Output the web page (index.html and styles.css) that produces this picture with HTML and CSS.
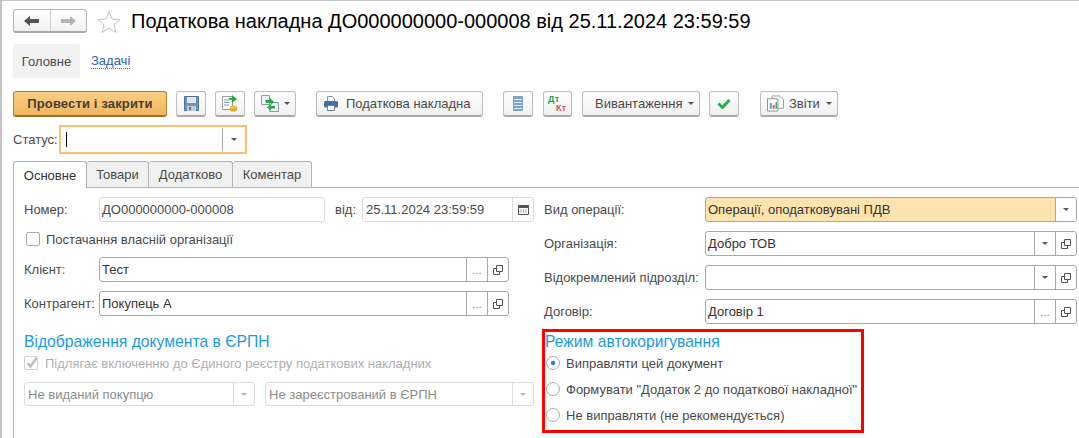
FILE: index.html
```html
<!DOCTYPE html>
<html lang="uk">
<head>
<meta charset="utf-8">
<title>Податкова накладна</title>
<link rel="stylesheet" href="styles.css">
</head>
<body>
<svg class="defs" width="0" height="0" aria-hidden="true">
  <symbol id="open" viewBox="0 0 10 10"><path d="M3.500 .5h6v6h-6z" fill="none" stroke="#555"/><path d="M3.500 3.500H.5v6h6V6.500" fill="none" stroke="#555"/></symbol>
  <symbol id="printer" viewBox="0 0 14 15"><path d="M3.500 .5h5l2 2v4h-7z" fill="#fff" stroke="#8a99a8"/><rect x="0" y="5" width="14" height="6.500" rx="1.500" fill="#3f6f9f"/><path d="M3.500 9.500h7v5h-7z" fill="#fff" stroke="#6f8296"/></symbol>
</svg>
<div class="page">
  <header class="head">
    <div class="nav">
      <span class="nav-btn"><svg width="16" height="12" viewBox="0 0 16 12"><path d="M0 6l6-5v3h9v4H6v3z" fill="#555"/></svg></span>
      <span class="nav-btn nav-next"><svg width="16" height="12" viewBox="0 0 16 12"><path d="M16 6l-6-5v3H1v4h9v3z" fill="#b3b3b3"/></svg></span>
    </div>
    <svg class="star" width="24" height="23" viewBox="0 0 24 23"><path d="M12 1.500l3 7.500 8 .6-6.100 5.100 2 7.800L12 18.200 5.100 22.500l2-7.800L1 9.600 9 9z" fill="#fff" stroke="#c4c4c4"/></svg>
    <h1 class="title">Податкова накладна ДО000000000-000008 від 25.11.2024 23:59:59</h1>
  </header>

  <nav class="sections">
    <span class="section section-on">Головне</span>
    <a class="section-link">Задачі</a>
  </nav>

  <div class="toolbar">
    <button class="btn btn-main w154">Провести і закрити</button>
    <button class="btn w30 ml9"><svg width="15" height="15" viewBox="0 0 15 15"><path d="M.5.500h14v14H.5z" fill="#6f95bd" stroke="#4d7196"/><path d="M3 1h9v6H3z" fill="#dfe8f1"/><path d="M3 10h9v5H3z" fill="#c3ccd5"/><path d="M5 11h2v3H5z" fill="#4d7196"/></svg></button>
    <button class="btn w30 ml9"><svg width="18" height="17" viewBox="0 0 18 17"><path d="M1.500 1.500h10v13h-10z" fill="#fff" stroke="#9a9a9a"/><path d="M3 5h5M3 7.500h5M3 10h5" stroke="#7d9cbc"/><path d="M7 3h4V0l5 4-5 4V5H9z" fill="#27a84a"/><ellipse cx="12.500" cy="12" rx="3.500" ry="1.500" fill="#e8c24a"/><path d="M9 12v3c0 2 7 2 7 0v-3c0 2-7 2-7 0z" fill="#d9a92c"/></svg></button>
    <button class="btn w42 ml9"><svg width="18" height="17" viewBox="0 0 18 17"><path d="M.5.500h8v9h-8z" fill="#eef2f5" stroke="#8e9aa5"/><path d="M8.500 7.500h9v9h-9z" fill="#eef2f5" stroke="#8e9aa5"/><path d="M4 5h4V2l5 5-3 3v-2H5z" fill="#27a84a"/><path d="M13 12H9v-2l-4 3.500 4 3v-2h4z" fill="#27a84a" transform="translate(1 -1)"/></svg><i class="caret"></i></button>
    <button class="btn btn-left w167 ml20"><svg class="ic" width="14" height="15"><use href="#printer"/></svg>Податкова накладна</button>
    <button class="btn w30 ml20"><svg width="10" height="15" viewBox="0 0 10 15"><rect width="10" height="15" rx="1" fill="#7fa3c7"/><path d="M1 3.500h8M1 6.500h8M1 9.500h8M1 12.500h8" stroke="#dfe9f2"/></svg></button>
    <button class="btn w29 ml10 dtkt"><span class="dt">Дт</span><span class="kt">Кт</span></button>
    <button class="btn btn-export w118 ml10">Вивантаження<i class="caret caret-text"></i></button>
    <button class="btn w30 ml9"><svg width="14" height="11" viewBox="0 0 14 11"><path d="M1.500 5.500l4 4 7-7.500" fill="none" stroke="#27b04c" stroke-width="3"/></svg></button>
    <button class="btn btn-report w78 ml21"><svg class="ic ic-report" width="17" height="17" viewBox="0 0 18 17"><path d="M5.500.5h8l4 4v9h-12z" fill="#fff" stroke="#9a9a9a"/><path d="M.5 3.500h11v13H.5z" fill="#fff" stroke="#8a8a8a"/><path d="M3 8h2v6H3z" fill="#4a9bd1"/><path d="M6 10h2v4H6z" fill="#d9534f"/><path d="M9 7h1.500v7H9z" fill="#37a653"/></svg>Звіти<i class="caret caret-text"></i></button>
  </div>

  <div class="status">
    <label class="status-label">Статус:</label>
    <div class="status-field"><span class="cursor"></span><span class="status-arrow"><i class="caret"></i></span></div>
  </div>

  <div class="tabs">
    <span class="tab tab-on t74">Основне</span>
    <span class="tab t62">Товари</span>
    <span class="tab t84">Додатково</span>
    <span class="tab t79">Коментар</span>
  </div>

  <main class="panel">
    <section class="col-left">
      <div class="row row-number">
        <label class="lbl l75">Номер:</label>
        <div class="field field-light w226"><span class="val val-tight">ДО000000000-000008</span></div>
        <label class="lbl date-lbl">від:</label>
        <div class="field field-light w172"><span class="val">25.11.2024 23:59:59</span><span class="seg seg-light"><svg width="11" height="11" viewBox="0 0 11 11"><path d="M.5 1.500h10v9H.5z" fill="#fff" stroke="#555"/><path d="M.5 1h10v3H.5z" fill="#555"/><path d="M2.500 6h1M5 6h1M7.500 6h1M2.500 8h1M5 8h1M7.500 8h1" stroke="#555"/></svg></span></div>
      </div>
      <label class="check-row own"><span class="box"></span>Постачання власній організації</label>
      <div class="row row-client">
        <label class="lbl l75">Клієнт:</label>
        <div class="field w410"><span class="val val-dark">Тест</span><span class="seg dots">...</span><span class="seg"><svg width="10" height="10"><use href="#open"/></svg></span></div>
      </div>
      <div class="row row-contr">
        <label class="lbl l75">Контрагент:</label>
        <div class="field w410"><span class="val val-dark">Покупець А</span><span class="seg dots">...</span><span class="seg"><svg width="10" height="10"><use href="#open"/></svg></span></div>
      </div>
      <h2 class="group-title">Відображення документа в ЄРПН</h2>
      <label class="check-row off"><span class="box box-off"><svg width="13" height="12" viewBox="0 0 13 12"><path d="M2.500 6l3 3.500 6-8.500" fill="none" stroke="#bdbdbd" stroke-width="2.500"/></svg></span>Підлягає включенню до Єдиного реєстру податкових накладних</label>
      <div class="row row-sel">
        <div class="field field-light w231 muted"><span class="val">Не виданий покупцю</span><span class="seg seg-light"><i class="caret caret-off"></i></span></div>
        <div class="field field-light w269 muted"><span class="val">Не зареєстрований в ЄРПН</span><span class="seg seg-light"><i class="caret caret-off"></i></span></div>
      </div>
    </section>

    <section class="col-right">
      <div class="row">
        <label class="lbl l161">Вид операції:</label>
        <div class="field w372 field-req"><span class="val val-dark">Операції, оподатковувані ПДВ</span><span class="seg seg-white"><i class="caret"></i></span></div>
      </div>
      <div class="row mt9">
        <label class="lbl l161">Організація:</label>
        <div class="field w372"><span class="val val-dark">Добро ТОВ</span><span class="seg"><i class="caret"></i></span><span class="seg"><svg width="10" height="10"><use href="#open"/></svg></span></div>
      </div>
      <div class="row mt9">
        <label class="lbl l161">Відокремлений підрозділ:</label>
        <div class="field w372"><span class="val"></span><span class="seg"><i class="caret"></i></span><span class="seg"><svg width="10" height="10"><use href="#open"/></svg></span></div>
      </div>
      <div class="row mt9">
        <label class="lbl l161">Договір:</label>
        <div class="field w372"><span class="val val-dark">Договір 1</span><span class="seg dots">...</span><span class="seg"><svg width="10" height="10"><use href="#open"/></svg></span></div>
      </div>
      <div class="mode">
        <h2 class="group-title mode-title">Режим автокоригування</h2>
        <label class="radio-row first"><span class="radio radio-on"></span>Виправляти цей документ</label>
        <label class="radio-row"><span class="radio"></span>Формувати "Додаток 2 до податкової накладної"</label>
        <label class="radio-row"><span class="radio"></span>Не виправляти (не рекомендується)</label>
      </div>
    </section>
  </main>
</div>
</body>
</html>
```
FILE: styles.css
```css
* { box-sizing: border-box; }
html, body { margin: 0; padding: 0; height: 100%; }
body { width: 1079px; height: 438px; overflow: hidden; background: #fff; font: 13px "Liberation Sans", Arial, sans-serif; color: #4a4a4a; }
.defs { position: absolute; }
.page { height: 438px; border-top: 1px solid #c4c4c4; border-left: 2px solid #c4c4c4; padding-left: 11px; overflow: hidden; }

.head { display: flex; align-items: center; height: 24px; margin-top: 8px; }
.nav { display: flex; width: 74px; height: 24px; border: 1px solid #b5b5b5; border-bottom: 2px solid #a8a8a8; border-radius: 3px; background: linear-gradient(#fff, #f1f1f1); }
.nav-btn { flex: 1; display: flex; align-items: center; justify-content: center; }
.nav-next { border-left: 1px solid #cfcfcf; }
.star { margin-left: 10px; }
.title { margin: 0 0 0 10px; font-size: 20px; font-weight: 400; color: #000; white-space: nowrap; }

.sections { display: flex; align-items: center; height: 34px; margin-top: 11px; }
.section { display: flex; align-items: center; justify-content: center; width: 67px; height: 34px; background: #f2f2f2; border-radius: 3px; color: #4a4a4a; }
.section-link { margin-left: 11px; color: #2b5fb8; border-bottom: 1px dotted #2b5fb8; line-height: 14px; }

.toolbar { display: flex; height: 26px; margin-top: 13px; }
.btn { display: flex; align-items: center; justify-content: center; height: 26px; padding: 0; border: 1px solid #bdbdbd; border-bottom: 2px solid #a9a9a9; border-radius: 3px; background: linear-gradient(#fff, #f0f0f0); font: inherit; color: #4a4a4a; }
.btn-main { border-color: #b07f35; border-bottom-color: #a0712c; background: linear-gradient(#f9cf86, #f2b65e); font-weight: 700; letter-spacing: .15px; color: #4a3f2f; }
.btn-left { justify-content: flex-start; padding-left: 7px; }
.btn-export { justify-content: flex-start; padding-left: 12px; }
.btn-report { justify-content: flex-start; padding-left: 6px; }
.w154 { width: 154px; } .w30 { width: 30px; } .w29 { width: 29px; } .w42 { width: 42px; } .w167 { width: 167px; } .w118 { width: 118px; } .w78 { width: 78px; }
.ml9 { margin-left: 9px; } .ml10 { margin-left: 10px; } .ml20 { margin-left: 20px; } .ml21 { margin-left: 21px; }
.ic { margin-right: 8px; flex: none; }
.ic-report { margin-right: 5px; }
.caret { display: inline-block; width: 0; height: 0; border-left: 3px solid transparent; border-right: 3px solid transparent; border-top: 3px solid #555; }
.btn .caret { margin-left: 5px; }
.btn .caret-text { margin-left: 6px; }
.caret-off { border-top-color: #b5b5b5; }
.dtkt { flex-direction: column; align-items: flex-start; padding-left: 4px; font-size: 9px; line-height: 9px; font-weight: 700; letter-spacing: .3px; }
.dt { color: #12a150; }
.kt { color: #e8474c; margin-left: 8px; }

.status { display: flex; align-items: center; height: 29px; margin-top: 8px; }
.status-label { width: 46px; }
.status-field { display: flex; align-items: center; width: 188px; height: 29px; border: 2px solid #f6c26f; }
.cursor { width: 1px; height: 15px; margin-left: 5px; background: #000; }
.status-arrow { display: flex; align-items: center; justify-content: center; width: 23px; height: 23px; margin-left: auto; border-left: 1px solid #a9a9a9; }

.tabs { display: flex; height: 27px; margin-top: 7px; align-items: flex-end; }
.tab { display: flex; align-items: center; justify-content: center; height: 27px; border: 1px solid #b3b3b3; border-left: 0; border-radius: 3px 3px 0 0; background: #f0f0f0; color: #4a4a4a; }
.tab-on { border-left: 1px solid #b3b3b3; border-bottom: 0; background: #fff; color: #333; }
.t74 { width: 74px; } .t62 { width: 62px; } .t84 { width: 84px; } .t79 { width: 79px; }

.panel { display: flex; height: 260px; margin-right: -2px; border-left: 1px solid #b3b3b3; position: relative; }
.panel::before { content: ""; position: absolute; left: 73px; right: 0; top: -1px; border-top: 1px solid #b3b3b3; }
.col-left { width: 530px; padding: 9px 0 0 10px; flex: none; }
.col-right { width: 533px; padding-top: 9px; flex: none; }

.row { display: flex; align-items: center; }
.lbl { flex: none; white-space: nowrap; color: #4a4a4a; }
.l75 { width: 75px; }
.l161 { width: 161px; }
.date-lbl { width: 27px; margin-left: 10px; }
.mt9 { margin-top: 9px; }

.field { display: flex; align-items: stretch; height: 25px; flex: none; border: 1px solid #a9a9a9; border-radius: 3px; background: #fff; }
.field-light { border-color: #dcdcdc; }
.field-req { background: #fde3ae; }
.w226 { width: 226px; } .w172 { width: 172px; } .w410 { width: 410px; } .w231 { width: 231px; } .w269 { width: 269px; } .w372 { width: 372px; }
.val { flex: 1; display: flex; align-items: center; padding-left: 3px; color: #4a4a4a; white-space: nowrap; }
.val-tight { padding-left: 2px; }
.val-dark { padding-left: 2px; color: #333; }
.seg { flex: none; display: flex; align-items: center; justify-content: center; width: 21px; border-left: 1px solid #a9a9a9; }
.seg-light { border-left-color: #dcdcdc; }
.seg-white { background: #fff; border-radius: 0 2px 2px 0; }
.dots { color: #777; font-size: 11px; }
.muted .val { color: #8c8c8c; }

.check-row { display: flex; align-items: center; white-space: nowrap; color: #4a4a4a; }
.box { flex: none; width: 14px; height: 14px; margin-right: 6px; border: 1px solid #a9a9a9; border-radius: 2px; background: #fff; }
.own { height: 14px; margin-top: 10px; margin-left: 2px; }
.row-client { margin-top: 11px; }
.row-contr { margin-top: 9px; }
.group-title { margin: 17px 0 0; font-size: 15.7px; line-height: 18px; font-weight: 400; color: #1c9ae0; white-space: nowrap; }
.off { height: 14px; margin-top: 5px; color: #b0b0b0; }
.box-off { position: relative; border-color: #d0d0d0; margin-right: 7px; margin-left: 0; }
.box-off svg { display: block; }
.row-sel { gap: 10px; margin-top: 12px; }
.row-sel .field { height: 24px; }

.mode { width: 322px; height: 104px; margin: 5px 0 0 -2px; border: 3px solid #f00; padding-left: 0; }
.mode-title { margin: 1px 0 0; line-height: 18px; }
.radio-row { display: flex; align-items: center; height: 14px; margin-top: 12px; white-space: nowrap; color: #4a4a4a; }
.radio-row.first { margin-top: 5px; }
.radio { flex: none; position: relative; width: 14px; height: 14px; margin: 0 6px 0 1px; border: 1px solid #a9a9a9; border-radius: 50%; background: #fff; }
.radio-on::after { content: ""; position: absolute; left: 4px; top: 4px; width: 4px; height: 4px; border-radius: 50%; background: #1a80d0; box-shadow: 0 0 1px #1a80d0; }
```
